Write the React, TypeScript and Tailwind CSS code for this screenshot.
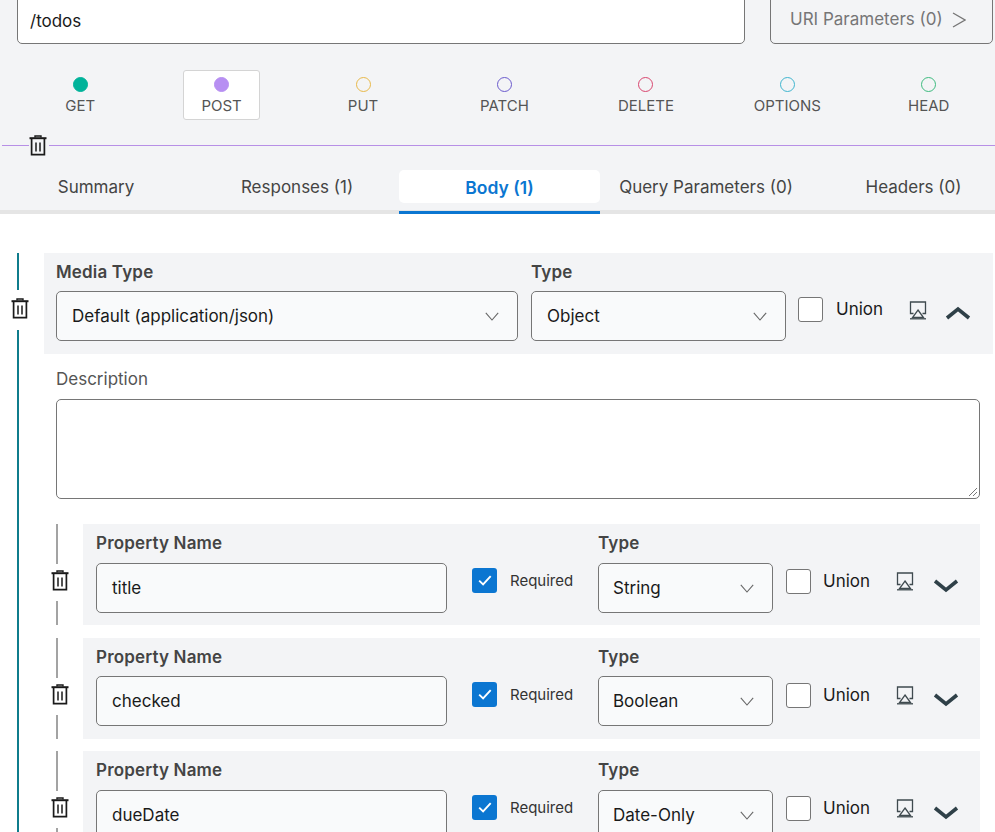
import React from "react";

const Trash = () => (
  <svg width="18" height="21" viewBox="0 0 18 21" fill="none" stroke="#1a1a1a" strokeWidth="1.7" className="shrink-0">
    <path d="M6 2.5V1h6v1.5" strokeWidth="1.4" />
    <path d="M0.5 3.2h17" strokeWidth="2" />
    <path d="M2.6 4v15.6h12.8V4" />
    <path d="M7 7.5v9M11 7.5v9" strokeWidth="1.5" />
  </svg>
);

const Airplay = () => (
  <svg width="18" height="19" viewBox="0 0 18 19" fill="none" stroke="#3f4a4f" strokeWidth="1.3" className="shrink-0">
    <path d="M4.5 12.5H1.5V1h15v11.5h-3" />
    <path d="M9 9l5.5 7.5h-11z" />
    <path d="M1 17.8h16" />
  </svg>
);

const Chevron = ({ up }: { up?: boolean }) => (
  <svg width="26" height="14" viewBox="0 0 26 14" fill="none" stroke="#2f4048" strokeWidth="3.6" className="shrink-0">
    <path d={up ? "M2 12L13 3l11 9" : "M2 2l11 9 11-9"} />
  </svg>
);

const SelectArrow = () => (
  <svg width="14" height="9" viewBox="0 0 14 9" fill="none" stroke="#666" strokeWidth="1.1" className="shrink-0">
    <path d="M0.8 0.8L7 8l6.2-7.2" />
  </svg>
);

const Check = () => (
  <svg width="14" height="11" viewBox="0 0 14 11" fill="none" stroke="#fff" strokeWidth="1.9">
    <path d="M1.2 5.6l3.9 3.8 7.6-8.2" />
  </svg>
);

const methods = [
  { n: "GET", c: "bg-[#00b39a] border-[#00b39a]" },
  { n: "POST", c: "bg-[#b78ff2] border-[#b78ff2]", active: true },
  { n: "PUT", c: "border-[#e9b949]" },
  { n: "PATCH", c: "border-[#6a5acd]" },
  { n: "DELETE", c: "border-[#d9466f]" },
  { n: "OPTIONS", c: "border-[#3fb5cf]" },
  { n: "HEAD", c: "border-[#3dbb7f]" },
];

const Select = ({ value, w, pl }: { value: string; w: string; pl: string }) => (
  <div className={`${w} ${pl} h-[50px] shrink-0 rounded-[5px] border border-[#767676] bg-[#f9fafb] flex items-center justify-between pr-[18px] text-[17px] text-[#1a1a1a]`}>
    <span className="pt-[2px]">{value}</span>
    <SelectArrow />
  </div>
);

const Union = ({ gap, textPt }: { gap: string; textPt: string }) => (
  <div className="flex items-center">
    <div className="w-[25px] h-[25px] rounded-[3px] border border-[#767676] bg-white" />
    <span className={`${gap} ${textPt} text-[17px] text-[#1a1a1a]`}>Union</span>
  </div>
);

const Property = ({ name, type, mt, inputMt }: { name: string; type: string; mt: string; inputMt: string }) => (
  <div className={`flex h-[101px] shrink-0 ${mt}`}>
    <div className="w-[24px] -ml-[10px] mr-[13px] flex flex-col items-center shrink-0">
      <div className="w-[2px] h-[40px] bg-[#a3a3a3] mr-[2px]" />
      <div className="h-[37px] flex items-center pb-[5px] ml-[3px]"><Trash /></div>
      <div className="w-[2px] flex-1 bg-[#a3a3a3] mr-[2px]" />
    </div>
    <div className="w-[897px] bg-[#f3f4f6] pl-[13px] flex">
      <div className="w-[351px] shrink-0">
        <div className="mt-[9px] h-[20px] leading-[20px] text-[17px] font-semibold tracking-[0.01em] text-[#444]">Property Name</div>
        <div className={`${inputMt} h-[50px] rounded-[5px] border border-[#767676] bg-[#f9fafb] flex items-center pl-[15px] pt-[2px] text-[17px] text-[#1a1a1a]`}>{name}</div>
      </div>
      <div className="ml-[25px] w-[126px] shrink-0 flex items-start pt-[44px]">
        <div className="w-[25px] h-[25px] rounded-[3px] bg-[#0b76d1] flex items-center justify-center"><Check /></div>
        <span className="ml-[13px] text-[15px] leading-[25px] text-[#333]">Required</span>
      </div>
      <div className="shrink-0">
        <div className="mt-[9px] h-[20px] leading-[20px] text-[17px] font-semibold tracking-[0.01em] text-[#444]">Type</div>
        <div className={inputMt}><Select value={type} w="w-[175px]" pl="pl-[14px]" /></div>
      </div>
      <div className="ml-[13px] flex items-start pt-[44px] h-[70px]">
        <Union gap="ml-[12px]" textPt="pt-[1px]" />
        <div className="ml-[26px] mt-[4px]"><Airplay /></div>
        <div className="ml-[19px] mt-[11px]"><Chevron /></div>
      </div>
    </div>
  </div>
);

export default function App() {
  return (
    <div className="w-[995px] h-[832px] overflow-hidden bg-white text-[17px]" style={{ fontFamily: "Inter, 'Liberation Sans', sans-serif" }}>
      <div className="h-[214px] bg-[#f3f4f6] flex flex-col">
        <div className="flex -mt-[6px] pl-[17px] shrink-0">
          <div className="w-[728px] h-[50px] rounded-[5px] border border-[#767676] bg-white flex items-center pl-[12px] pt-[6px] text-[17px] text-[#1a1a1a]">/todos</div>
          <div className="ml-[25px] w-[223px] h-[50px] rounded-[5px] border border-[#767676] flex items-center pl-[19px] pt-[2px] text-[#767676]">
            <span>URI Parameters (0)</span>
            <svg width="14" height="16" viewBox="0 0 14 16" fill="none" stroke="#767676" strokeWidth="1.3" className="ml-[9px]">
              <path d="M1 1l12 7-12 7" />
            </svg>
          </div>
        </div>
        <div className="grid grid-cols-7 w-[990px] ml-[9.5px] mt-[26px] shrink-0">
          {methods.map((m) => (
            <div key={m.n} className="flex justify-center">
              <div className={`w-[77px] h-[50px] rounded-[3px] flex flex-col items-center pt-[6px] border ${m.active ? "bg-white border-[#d4d4d4] " : "border-transparent"}`}>
                <div className={`w-[15px] h-[15px] rounded-full border ${m.c}`} />
                <div className="mt-[4px] text-[15px] leading-[20px] text-[#555]">{m.n}</div>
              </div>
            </div>
          ))}
        </div>
        <div className="flex items-center h-[21px] mt-[15px] pl-[2px] shrink-0">
          <div className="w-[27px] h-px bg-[#b78fe6]" />
          <Trash />
          <div className="ml-[2px] flex-1 h-px bg-[#b78fe6]" />
        </div>
        <div className="flex mt-[14px] h-[44px] shrink-0 border-b-[4px] border-[#e5e5e5] w-[995px] text-[17px] text-[#444]">
          <div className="w-[192px] h-[33px] flex items-center justify-center pt-[3px]">Summary</div>
          <div className="w-[207px] h-[33px] flex items-center justify-center pl-[3px] pt-[3px]">Responses (1)</div>
          <div className="w-[201px] h-[44px] -mb-[4px] border-b-[3px] border-[#0b76d1] shrink-0">
            <div className="h-[33px] rounded-[5px] bg-white flex items-center justify-center pt-[3px] text-[17.5px] font-semibold text-[#0b76d1]">Body (1)</div>
          </div>
          <div className="w-[212px] h-[33px] flex items-center justify-center pt-[3px]">Query Parameters (0)</div>
          <div className="w-[183px] h-[33px] flex items-center justify-center pl-[20px] pt-[3px]">Headers (0)</div>
        </div>
      </div>

      <div className="flex pl-[8px] pt-[39px]">
        <div className="w-[22px] flex flex-col items-center shrink-0 h-[600px]">
          <div className="w-[2px] h-[37px] bg-[#0f7c8c] mr-[2px]" />
          <div className="h-[40px] flex items-center ml-[2px] pb-[4px]"><Trash /></div>
          <div className="w-[2px] flex-1 bg-[#0f7c8c] mr-[2px]" />
        </div>
        <div className="ml-[14px] flex-1 flex flex-col">
          <div className="w-[949px] h-[101px] bg-[#f3f4f6] pl-[12px] flex">
            <div className="w-[462px] shrink-0">
              <div className="mt-[9px] h-[20px] leading-[20px] font-semibold tracking-[0.01em] text-[#444]">Media Type</div>
              <div className="mt-[9px]"><Select value="Default (application/json)" w="w-[462px]" pl="pl-[15px]" /></div>
            </div>
            <div className="ml-[13px] shrink-0">
              <div className="mt-[9px] h-[20px] leading-[20px] font-semibold tracking-[0.01em] text-[#444]">Type</div>
              <div className="mt-[9px]"><Select value="Object" w="w-[255px]" pl="pl-[15px]" /></div>
            </div>
            <div className="ml-[12px] flex items-start pt-[44px] h-[70px]">
              <Union gap="ml-[13px]" textPt="" />
              <div className="ml-[26px] mt-[4px]"><Airplay /></div>
              <div className="ml-[18px] mt-[9px]"><Chevron up /></div>
            </div>
          </div>
          <div className="pl-[12px] mt-[15px] h-[20px] leading-[20px] text-[17px] text-[#555]">Description</div>
          <div className="ml-[12px] mt-[10px] w-[924px] h-[100px] rounded-[5px] border border-[#767676] bg-white relative shrink-0">
            <svg width="10" height="10" viewBox="0 0 10 10" stroke="#777" strokeWidth="1" className="absolute right-[1px] bottom-[1px]">
              <path d="M1 9l8-8M5 9l4-4" />
            </svg>
          </div>
          <div className="ml-[12px] mt-[25px] flex flex-col">
            <Property name="title" type="String" mt="" inputMt="mt-[10px]" />
            <Property name="checked" type="Boolean" mt="mt-[13px]" inputMt="mt-[9px]" />
            <Property name="dueDate" type="Date-Only" mt="mt-[12px]" inputMt="mt-[10px]" />
          </div>
        </div>
      </div>
    </div>
  );
}
